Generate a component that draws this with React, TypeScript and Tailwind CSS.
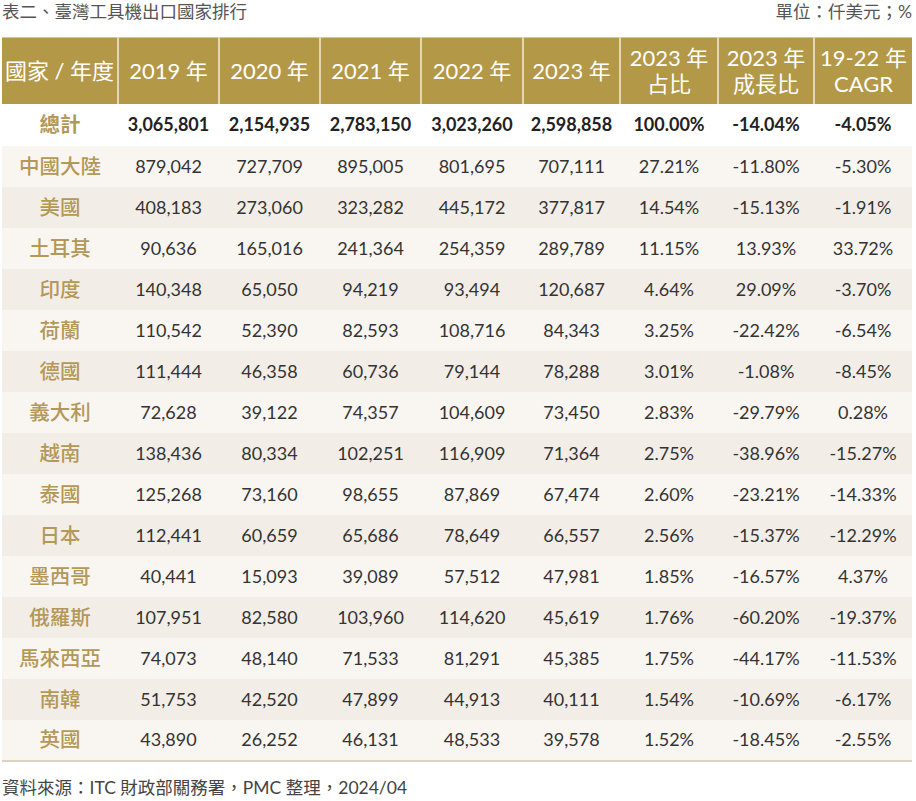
const widths = [116, 101, 101, 101, 102, 97, 98, 96, 98]

const rows: string[][] = [
  ["中國大陸", "879,042", "727,709", "895,005", "801,695", "707,111", "27.21%", "-11.80%", "-5.30%"],
  ["美國", "408,183", "273,060", "323,282", "445,172", "377,817", "14.54%", "-15.13%", "-1.91%"],
  ["土耳其", "90,636", "165,016", "241,364", "254,359", "289,789", "11.15%", "13.93%", "33.72%"],
  ["印度", "140,348", "65,050", "94,219", "93,494", "120,687", "4.64%", "29.09%", "-3.70%"],
  ["荷蘭", "110,542", "52,390", "82,593", "108,716", "84,343", "3.25%", "-22.42%", "-6.54%"],
  ["德國", "111,444", "46,358", "60,736", "79,144", "78,288", "3.01%", "-1.08%", "-8.45%"],
  ["義大利", "72,628", "39,122", "74,357", "104,609", "73,450", "2.83%", "-29.79%", "0.28%"],
  ["越南", "138,436", "80,334", "102,251", "116,909", "71,364", "2.75%", "-38.96%", "-15.27%"],
  ["泰國", "125,268", "73,160", "98,655", "87,869", "67,474", "2.60%", "-23.21%", "-14.33%"],
  ["日本", "112,441", "60,659", "65,686", "78,649", "66,557", "2.56%", "-15.37%", "-12.29%"],
  ["墨西哥", "40,441", "15,093", "39,089", "57,512", "47,981", "1.85%", "-16.57%", "4.37%"],
  ["俄羅斯", "107,951", "82,580", "103,960", "114,620", "45,619", "1.76%", "-60.20%", "-19.37%"],
  ["馬來西亞", "74,073", "48,140", "71,533", "81,291", "45,385", "1.75%", "-44.17%", "-11.53%"],
  ["南韓", "51,753", "42,520", "47,899", "44,913", "40,111", "1.54%", "-10.69%", "-6.17%"],
  ["英國", "43,890", "26,252", "46,131", "48,533", "39,578", "1.52%", "-18.45%", "-2.55%"],
]

const total = ["總計", "3,065,801", "2,154,935", "2,783,150", "3,023,260", "2,598,858", "100.00%", "-14.04%", "-4.05%"]

const headers: string[][] = [
  ["國家 / 年度"],
  ["2019 年"],
  ["2020 年"],
  ["2021 年"],
  ["2022 年"],
  ["2023 年"],
  ["2023 年", "占比"],
  ["2023 年", "成長比"],
  ["19-22 年", "CAGR"],
]

const font = { fontFamily: 'Lato, "Noto Sans CJK TC", sans-serif' }

export default function App() {
  return (
    <div className="w-[916px] h-[801px] bg-white text-[#333]" style={font}>
      <div className="flex items-center justify-between pl-[2px] pr-[4px] h-[25px] text-[17.5px] text-[#555]">
        <span>表二、臺灣工具機出口國家排行</span>
        <span>單位：仟美元；%</span>
      </div>

      <table className="ml-[2px] mt-[12px] border-collapse table-fixed w-[910px]">
        <colgroup>
          {widths.map((w, i) => (
            <col key={i} style={{ width: w }} />
          ))}
        </colgroup>
        <thead>
          <tr className="h-[66px] bg-[#b39848] border-t border-[#d6c69a]">
            {headers.map((h, i) => (
              <th
                key={i}
                className={[
                  "p-0 font-normal text-white text-[22px] leading-[26px] text-center align-middle",
                  i > 0 ? "border-l-2 border-[#e3d6b0]" : "",
                ].join(" ")}
              >
                {h.map((line) => (
                  <div key={line}>{line}</div>
                ))}
              </th>
            ))}
          </tr>
        </thead>
        <tbody>
          <tr className="h-[42px] bg-white">
            {total.map((c, i) => (
              <td
                key={i}
                className={[
                  "p-0 text-center align-middle font-bold",
                  i === 0 ? "text-[#b39858] text-[20.5px]" : "text-[#222] text-[18px]",
                ].join(" ")}
              >
                {c}
              </td>
            ))}
          </tr>
          {rows.map((r, ri) => (
            <tr
              key={r[0]}
              className={[
                "h-[41px]",
                ri % 2 === 0 ? "bg-[#f9f6f1]" : "bg-[#f2eee7]",
                ri === rows.length - 1 ? "border-b-2 border-[#ddd3c1]" : "",
              ].join(" ")}
            >
              {r.map((c, i) => (
                <td
                  key={i}
                  className={[
                    "p-0 text-center align-middle",
                    i === 0 ? "text-[#b39858] text-[20.5px] font-medium" : "text-[#333] text-[18px]",
                  ].join(" ")}
                >
                  {c}
                </td>
              ))}
            </tr>
          ))}
        </tbody>
      </table>

      <div className="pl-[2px] mt-[13px] text-[17.5px] text-[#444]">
        資料來源：ITC 財政部關務署，PMC 整理，2024/04
      </div>
    </div>
  )
}
